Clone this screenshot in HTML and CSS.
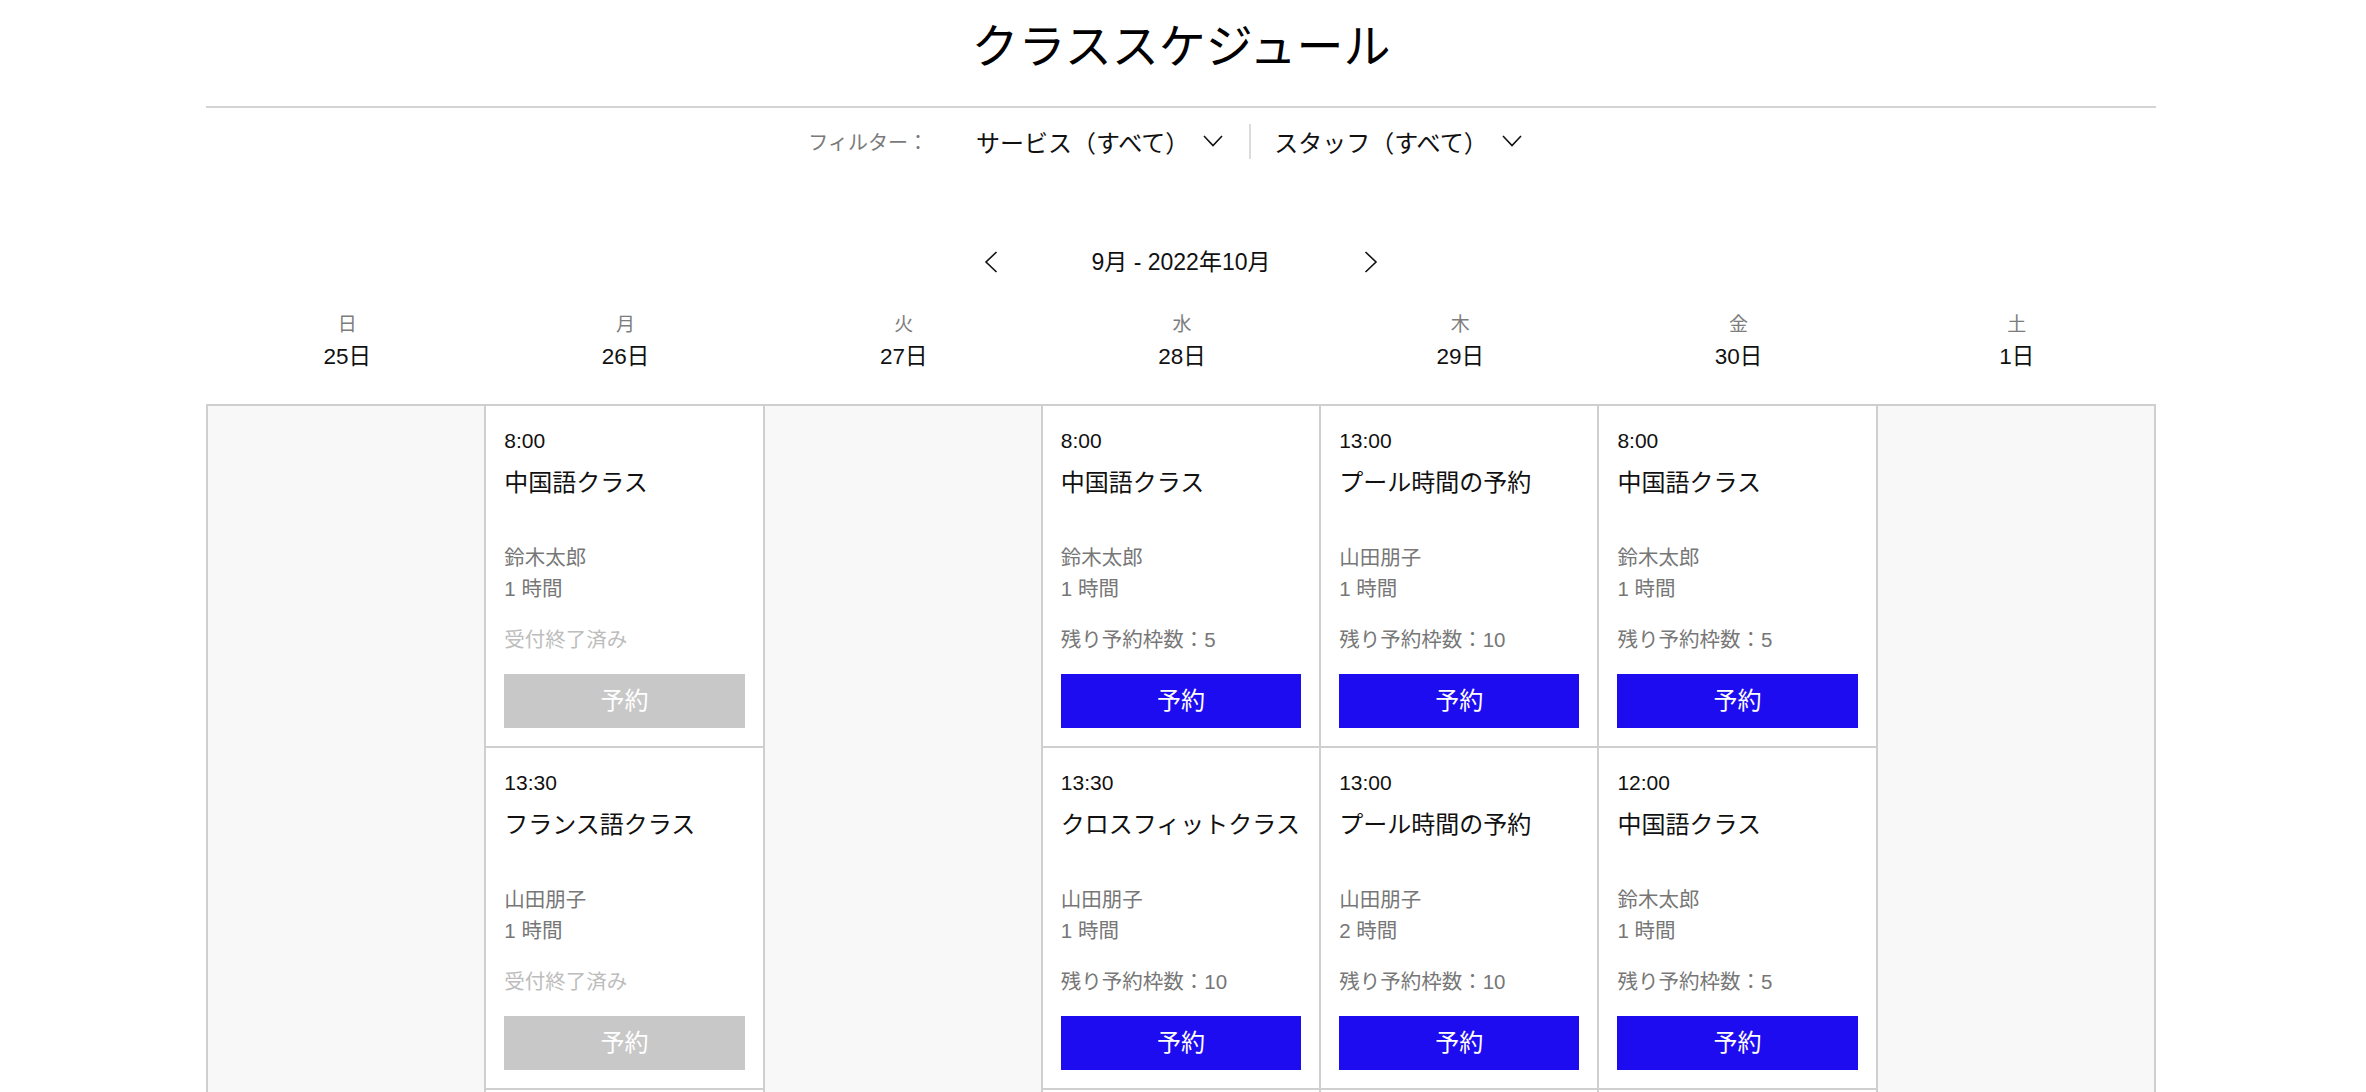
FILE: index.html
```html
<!DOCTYPE html>
<html lang="ja">
<head>
<meta charset="utf-8">
<title>クラススケジュール</title>
<link rel="stylesheet" href="styles.css">
</head>
<body>
<div class="page">
  <header class="header">
    <h1 class="title">クラススケジュール</h1>
  </header>

  <div class="filters">
    <span class="filter-label">フィルター：</span>
    <button class="filter-btn">
      <span>サービス（すべて）</span>
      <svg class="chev-down" width="20" height="12" viewBox="0 0 20 12"><polyline points="1,1 10,10.5 19,1" fill="none" stroke="#111" stroke-width="1.6"/></svg>
    </button>
    <span class="filter-divider"></span>
    <button class="filter-btn">
      <span>スタッフ（すべて）</span>
      <svg class="chev-down" width="20" height="12" viewBox="0 0 20 12"><polyline points="1,1 10,10.5 19,1" fill="none" stroke="#111" stroke-width="1.6"/></svg>
    </button>
  </div>

  <div class="nav">
    <button class="nav-btn" aria-label="前へ">
      <svg width="14" height="22" viewBox="0 0 14 22"><polyline points="12.5,1 2,11 12.5,21" fill="none" stroke="#111" stroke-width="1.6"/></svg>
    </button>
    <span class="nav-label">9月 - 2022年10月</span>
    <button class="nav-btn" aria-label="次へ">
      <svg width="14" height="22" viewBox="0 0 14 22"><polyline points="1.5,1 12,11 1.5,21" fill="none" stroke="#111" stroke-width="1.6"/></svg>
    </button>
  </div>

  <div class="days">
    <div class="day"><div class="wd">日</div><div class="dt">25日</div></div>
    <div class="day"><div class="wd">月</div><div class="dt">26日</div></div>
    <div class="day"><div class="wd">火</div><div class="dt">27日</div></div>
    <div class="day"><div class="wd">水</div><div class="dt">28日</div></div>
    <div class="day"><div class="wd">木</div><div class="dt">29日</div></div>
    <div class="day"><div class="wd">金</div><div class="dt">30日</div></div>
    <div class="day"><div class="wd">土</div><div class="dt">1日</div></div>
  </div>

  <div class="grid">
    <div class="col col-empty"></div>

    <div class="col">
      <div class="card">
        <div class="time">8:00</div>
        <div class="name">中国語クラス</div>
        <div class="meta staff">鈴木太郎</div>
        <div class="meta">1 時間</div>
        <div class="status closed">受付終了済み</div>
        <button class="book disabled">予約</button>
      </div>
      <div class="card">
        <div class="time">13:30</div>
        <div class="name">フランス語クラス</div>
        <div class="meta staff">山田朋子</div>
        <div class="meta">1 時間</div>
        <div class="status closed">受付終了済み</div>
        <button class="book disabled">予約</button>
      </div>
    </div>

    <div class="col col-empty"></div>

    <div class="col">
      <div class="card">
        <div class="time">8:00</div>
        <div class="name">中国語クラス</div>
        <div class="meta staff">鈴木太郎</div>
        <div class="meta">1 時間</div>
        <div class="status">残り予約枠数：5</div>
        <button class="book">予約</button>
      </div>
      <div class="card">
        <div class="time">13:30</div>
        <div class="name">クロスフィットクラス</div>
        <div class="meta staff">山田朋子</div>
        <div class="meta">1 時間</div>
        <div class="status">残り予約枠数：10</div>
        <button class="book">予約</button>
      </div>
    </div>

    <div class="col">
      <div class="card">
        <div class="time">13:00</div>
        <div class="name">プール時間の予約</div>
        <div class="meta staff">山田朋子</div>
        <div class="meta">1 時間</div>
        <div class="status">残り予約枠数：10</div>
        <button class="book">予約</button>
      </div>
      <div class="card">
        <div class="time">13:00</div>
        <div class="name">プール時間の予約</div>
        <div class="meta staff">山田朋子</div>
        <div class="meta">2 時間</div>
        <div class="status">残り予約枠数：10</div>
        <button class="book">予約</button>
      </div>
    </div>

    <div class="col">
      <div class="card">
        <div class="time">8:00</div>
        <div class="name">中国語クラス</div>
        <div class="meta staff">鈴木太郎</div>
        <div class="meta">1 時間</div>
        <div class="status">残り予約枠数：5</div>
        <button class="book">予約</button>
      </div>
      <div class="card">
        <div class="time">12:00</div>
        <div class="name">中国語クラス</div>
        <div class="meta staff">鈴木太郎</div>
        <div class="meta">1 時間</div>
        <div class="status">残り予約枠数：5</div>
        <button class="book">予約</button>
      </div>
    </div>

    <div class="col col-empty"></div>
  </div>
</div>
</body>
</html>
```

FILE: styles.css
```css
* {
  box-sizing: border-box;
}

html, body {
  margin: 0;
  padding: 0;
  background: #ffffff;
}

body {
  font-family: "Liberation Sans", "Noto Sans CJK JP", sans-serif;
  color: #111111;
}

button {
  font-family: inherit;
  border: none;
  background: none;
  padding: 0;
  margin: 0;
  color: inherit;
  cursor: pointer;
}

.page {
  width: 1950px;
  margin: 0 210px 0 206px;
}

/* header */
.header {
  padding: 16px 0 28px;
  border-bottom: 2px solid #d4d4d4;
}

.title {
  margin: 0;
  font-size: 47px;
  line-height: 62px;
  font-weight: 400;
  text-align: center;
  color: #000000;
  letter-spacing: 0;
}

/* filters */
.filters {
  margin-top: 15px;
  height: 36px;
  display: flex;
  align-items: center;
  justify-content: center;
  padding-right: 32px;
}

.filter-label {
  font-size: 20px;
  color: #7a7a7a;
  margin-right: 48px;
}

.filter-btn {
  display: flex;
  align-items: center;
  gap: 14px;
  font-size: 24px;
  color: #111111;
}

.chev-down {
  display: block;
}

.filter-divider {
  width: 2px;
  height: 35px;
  background: #dcdcdc;
  margin: 0 23px 0 26px;
}

/* month nav */
.nav {
  margin-top: 88px;
  height: 30px;
  display: flex;
  align-items: center;
  justify-content: center;
  gap: 92px;
}

.nav-btn {
  display: flex;
  align-items: center;
  justify-content: center;
  width: 14px;
  height: 22px;
}

.nav-label {
  font-size: 23px;
  line-height: 30px;
  color: #111111;
  min-width: 182px;
  text-align: center;
}

/* day headers */
.days {
  margin-top: 33px;
  display: grid;
  grid-template-columns: repeat(7, 1fr);
  padding-left: 2px;
}

.day {
  text-align: center;
}

.wd {
  font-size: 19px;
  line-height: 30px;
  color: #7d7d7d;
}

.dt {
  font-size: 22.5px;
  line-height: 34px;
  color: #111111;
}

/* grid */
.grid {
  margin-top: 30px;
  display: grid;
  grid-template-columns: repeat(7, 1fr);
  border-top: 2px solid #cfcfcf;
  border-left: 2px solid #cfcfcf;
  min-height: 800px;
}

.col {
  border-right: 2px solid #cfcfcf;
  background: #ffffff;
  display: flex;
  flex-direction: column;
}

.col-empty {
  background: #f8f8f8;
}

.card {
  padding: 20px 18px 18px;
  border-bottom: 2px solid #cfcfcf;
  background: #ffffff;
}

.time {
  font-size: 21px;
  line-height: 30px;
  color: #111111;
}

.name {
  margin-top: 9px;
  font-size: 24px;
  line-height: 36px;
  color: #111111;
  white-space: nowrap;
}

.meta {
  font-size: 20.5px;
  line-height: 31px;
  color: #777777;
}

.staff {
  margin-top: 41px;
}

.status {
  margin-top: 20px;
  font-size: 20.5px;
  line-height: 31px;
  color: #777777;
}

.status.closed {
  color: #bdbdbd;
}

.book {
  display: block;
  width: 100%;
  margin-top: 19px;
  height: 54px;
  background: #1e0cf0;
  color: #ffffff;
  font-size: 24px;
  line-height: 54px;
  text-align: center;
}

.book.disabled {
  background: #c8c8c8;
  color: #ffffff;
  cursor: default;
}
```
